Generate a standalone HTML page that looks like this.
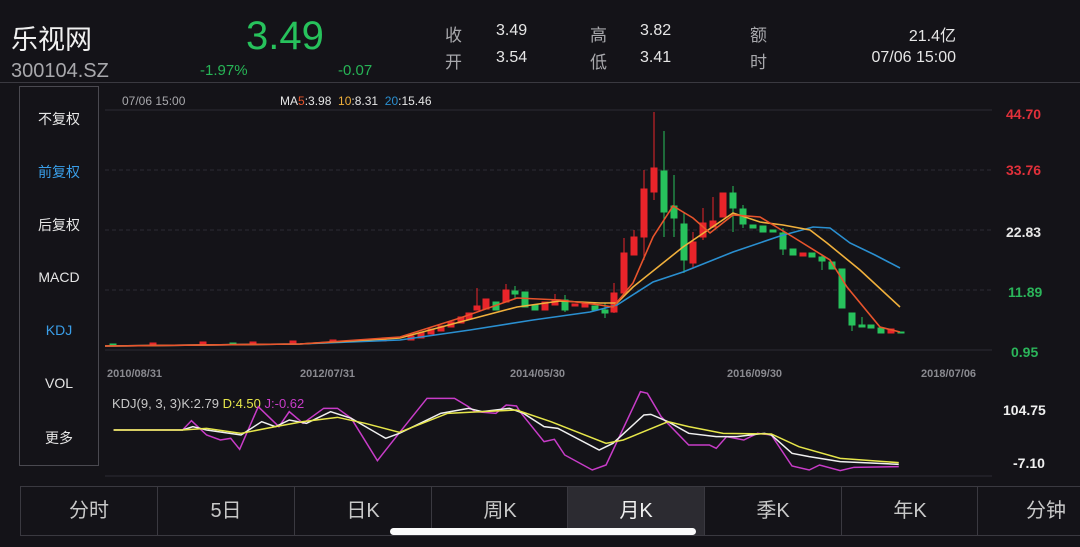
<!DOCTYPE html>
<html><head><meta charset="utf-8"><style>
body{margin:0;width:1080px;height:547px;background:#141318;overflow:hidden;position:relative;font-family:"Liberation Sans","Noto Sans CJK SC",sans-serif;}
.a{position:absolute;white-space:nowrap;}
.side{position:absolute;left:19px;top:86px;width:78px;height:378px;border:1px solid #4a4950;}
.side div{position:absolute;width:78px;text-align:center;font-size:14px;color:#e6e6e6;}
.tabs{position:absolute;left:20px;top:486px;width:1070px;height:48px;border-top:1px solid #3a3940;border-bottom:1px solid #3a3940;}
.tabs div{position:absolute;top:0;height:48px;line-height:48px;text-align:center;font-size:20px;color:#c8c8c8;border-left:1px solid #3a3940;width:136px;}
</style></head><body>
<div class="a" style="left:11px;top:18px;font-size:27px;color:#f0f0f0;">乐视网</div>
<div class="a" style="left:11px;top:60px;font-size:20px;color:#a8a8ac;">300104.SZ</div>
<div class="a" style="left:246px;top:14px;font-size:40px;color:#27c25c;">3.49</div>
<div class="a" style="left:200px;top:62px;font-size:15px;color:#27b456;">-1.97%</div>
<div class="a" style="left:338px;top:62px;font-size:15px;color:#27b456;">-0.07</div>
<div class="a" style="left:445px;top:21px;font-size:17px;color:#a8a8ac;">收</div>
<div class="a" style="left:496px;top:22px;font-size:16px;color:#e6e6e6;">3.49</div>
<div class="a" style="left:445px;top:48px;font-size:17px;color:#a8a8ac;">开</div>
<div class="a" style="left:496px;top:49px;font-size:16px;color:#e6e6e6;">3.54</div>
<div class="a" style="left:590px;top:21px;font-size:17px;color:#a8a8ac;">高</div>
<div class="a" style="left:640px;top:22px;font-size:16px;color:#e6e6e6;">3.82</div>
<div class="a" style="left:590px;top:48px;font-size:17px;color:#a8a8ac;">低</div>
<div class="a" style="left:640px;top:49px;font-size:16px;color:#e6e6e6;">3.41</div>
<div class="a" style="left:750px;top:21px;font-size:17px;color:#a8a8ac;">额</div>
<div class="a" style="left:750px;top:48px;font-size:17px;color:#a8a8ac;">时</div>
<div class="a" style="right:124px;top:22px;font-size:16px;color:#e6e6e6;">21.4亿</div>
<div class="a" style="right:124px;top:49px;font-size:16px;color:#e6e6e6;">07/06 15:00</div>
<div class="a" style="left:0;top:82px;width:1080px;height:1px;background:#3a3940;"></div>

<div class="side">
<div style="top:22px">不复权</div>
<div style="top:75px;color:#3a9ee8">前复权</div>
<div style="top:128px">后复权</div>
<div style="top:182px">MACD</div>
<div style="top:235px;color:#3a9ee8">KDJ</div>
<div style="top:288px">VOL</div>
<div style="top:341px">更多</div>
</div>

<div class="a" style="left:122px;top:94px;font-size:12px;color:#a8a8ac;">07/06 15:00</div>
<div class="a" style="left:280px;top:94px;font-size:12px;color:#e6e6e6;">MA<span style="color:#e8542c">5</span>:3.98 &nbsp;<span style="color:#f0b03c">10</span>:8.31 &nbsp;<span style="color:#2a8fd0">20</span>:15.46</div>
<div class="a" style="left:1006px;top:106px;font-size:14px;font-weight:bold;color:#e0303a;">44.70</div>
<div class="a" style="left:1006px;top:162px;font-size:14px;font-weight:bold;color:#e0303a;">33.76</div>
<div class="a" style="left:1006px;top:224px;font-size:14px;font-weight:bold;color:#e6e6e6;">22.83</div>
<div class="a" style="left:1008px;top:284px;font-size:14px;font-weight:bold;color:#2bb55a;">11.89</div>
<div class="a" style="left:1011px;top:344px;font-size:14px;font-weight:bold;color:#2bb55a;">0.95</div>
<div class="a" style="left:107px;top:368px;font-size:11px;font-weight:bold;color:#8a8a90;">2010/08/31</div>
<div class="a" style="left:300px;top:368px;font-size:11px;font-weight:bold;color:#8a8a90;">2012/07/31</div>
<div class="a" style="left:510px;top:368px;font-size:11px;font-weight:bold;color:#8a8a90;">2014/05/30</div>
<div class="a" style="left:727px;top:368px;font-size:11px;font-weight:bold;color:#8a8a90;">2016/09/30</div>
<div class="a" style="left:921px;top:368px;font-size:11px;font-weight:bold;color:#8a8a90;">2018/07/06</div>
<div class="a" style="left:112px;top:396px;font-size:13px;color:#c8c8c8;">KDJ(9, 3, 3)K:2.79 <span style="color:#e6e64a">D:4.50</span> <span style="color:#c83cc8">J:-0.62</span></div>
<div class="a" style="left:1003px;top:402px;font-size:14px;font-weight:bold;color:#f0f0f0;">104.75</div>
<div class="a" style="left:1013px;top:455px;font-size:14px;font-weight:bold;color:#f0f0f0;">-7.10</div>

<svg class="a" style="left:0;top:0" width="1080" height="547">
<g stroke="#2c2b33" stroke-width="1">
<line x1="105" y1="110" x2="992" y2="110"/>
<line x1="105" y1="170" x2="992" y2="170" stroke-dasharray="4 3"/>
<line x1="105" y1="230" x2="992" y2="230" stroke-dasharray="4 3"/>
<line x1="105" y1="290" x2="992" y2="290" stroke-dasharray="4 3"/>
<line x1="105" y1="350" x2="992" y2="350"/>
<line x1="105" y1="476" x2="992" y2="476"/>
</g>
<g stroke-width="1">
<!-- early flat candles -->
<g fill="#e8242a" stroke="#e8242a">
<rect x="150" y="343" width="6" height="2"/><rect x="200" y="342" width="6" height="2"/><rect x="250" y="342" width="6" height="2"/><rect x="290" y="341" width="6" height="2"/><rect x="330" y="340" width="6" height="2"/><rect x="380" y="339" width="6" height="2"/>
<rect x="408" y="336" width="6" height="4"/><rect x="418" y="333" width="6" height="5"/><rect x="428" y="329" width="6" height="5"/><rect x="438" y="326" width="6" height="5"/><rect x="448" y="322" width="6" height="5"/><rect x="458" y="317" width="6" height="6"/><rect x="466" y="313" width="6" height="6"/>
<line x1="477" y1="288" x2="477" y2="310"/><rect x="474" y="306" width="6" height="4"/>
<rect x="483" y="299" width="6" height="10"/>
<line x1="506" y1="284" x2="506" y2="302"/><rect x="503" y="290" width="6" height="12"/>
<rect x="542" y="302" width="6" height="8"/><line x1="555" y1="294" x2="555" y2="305"/><rect x="552" y="300" width="6" height="5"/>
<rect x="572" y="304" width="6" height="2"/><rect x="582" y="304" width="6" height="3"/>
<line x1="614" y1="283" x2="614" y2="313"/><rect x="611" y="293" width="6" height="19"/>
<line x1="624" y1="238" x2="624" y2="293"/><rect x="621" y="253" width="6" height="40"/>
<line x1="634" y1="230" x2="634" y2="255"/><rect x="631" y="237" width="6" height="18"/>
<line x1="644" y1="170" x2="644" y2="260"/><rect x="641" y="189" width="6" height="48"/>
<line x1="654" y1="112" x2="654" y2="200"/><rect x="651" y="168" width="6" height="24"/>
<line x1="693" y1="232" x2="693" y2="268"/><rect x="690" y="242" width="6" height="21"/>
<line x1="703" y1="208" x2="703" y2="240"/><rect x="700" y="223" width="6" height="14"/>
<line x1="713" y1="197" x2="713" y2="228"/><rect x="710" y="221" width="6" height="6"/>
<rect x="720" y="193" width="6" height="24"/>
<rect x="800" y="253" width="6" height="3"/><rect x="888" y="329" width="6" height="4"/>
</g>
<g fill="#27c25c" stroke="#27c25c">
<rect x="110" y="344" width="6" height="2"/><rect x="230" y="343" width="6" height="1"/>
<rect x="493" y="302" width="6" height="8"/><line x1="515" y1="286" x2="515" y2="298"/><rect x="512" y="291" width="6" height="3"/>
<rect x="522" y="292" width="6" height="15"/><rect x="532" y="305" width="6" height="5"/>
<line x1="565" y1="295" x2="565" y2="312"/><rect x="562" y="300" width="6" height="10"/>
<rect x="592" y="306" width="6" height="4"/><line x1="605" y1="303" x2="605" y2="318"/><rect x="602" y="310" width="6" height="3"/>
<line x1="664" y1="131" x2="664" y2="237"/><rect x="661" y="171" width="6" height="41"/>
<line x1="674" y1="175" x2="674" y2="237"/><rect x="671" y="206" width="6" height="12"/>
<line x1="684" y1="212" x2="684" y2="273"/><rect x="681" y="224" width="6" height="36"/>
<line x1="733" y1="186" x2="733" y2="232"/><rect x="730" y="193" width="6" height="15"/>
<line x1="743" y1="205" x2="743" y2="228"/><rect x="740" y="209" width="6" height="15"/>
<rect x="750" y="225" width="6" height="3"/><rect x="760" y="226" width="6" height="6"/><rect x="770" y="230" width="6" height="2"/>
<line x1="783" y1="228" x2="783" y2="255"/><rect x="780" y="233" width="6" height="16"/>
<rect x="790" y="249" width="6" height="6"/><rect x="809" y="253" width="6" height="4"/>
<line x1="822" y1="255" x2="822" y2="270"/><rect x="819" y="257" width="6" height="4"/>
<rect x="829" y="262" width="6" height="7"/>
<rect x="839" y="269" width="6" height="39"/>
<line x1="852" y1="313" x2="852" y2="331"/><rect x="849" y="313" width="6" height="12"/>
<line x1="862" y1="317" x2="862" y2="326"/><rect x="859" y="325" width="6" height="2"/>
<rect x="868" y="325" width="6" height="3"/>
<rect x="878" y="328" width="6" height="5"/><rect x="898" y="332" width="6" height="1"/>
</g>
</g>
<g fill="none" stroke-width="1.6">
<polyline stroke="#2a8fd0" points="105,346 300,344 400,340 470,330 533,320 590,312 617,305 653,282 683,272 733,252 780,236 813,227 830,228 850,243 875,255 900,268"/>
<polyline stroke="#f0b03c" points="105,346 300,344 400,338 460,322 517,307 560,301 600,303 617,303 633,287 683,247 733,213 760,222 783,225 810,230 827,243 860,270 900,307"/>
<polyline stroke="#e8542c" points="105,346 300,344 400,337 460,318 517,298 560,300 600,305 613,307 633,283 653,237 673,206 693,218 710,233 733,215 760,217 793,237 830,260 847,287 880,327 900,332"/>
</g>
<g fill="none" transform="translate(0,380) scale(0.6887,0.3333)">
<polyline vector-effect="non-scaling-stroke" stroke-width="1.5" stroke="#c83cc8" points="165,150 265,150 278,122 300,165 320,180 335,175 348,208 375,80 405,140 420,95 440,130 470,85 490,85 510,115 548,242 580,158 620,55 660,55 680,80 690,95 720,100 735,75 750,78 755,95 790,185 805,178 820,225 860,270 880,255 930,35 940,40 960,110 1000,195 1030,195 1040,205 1055,170 1080,180 1100,160 1120,165 1150,258 1175,270 1190,255 1220,272 1240,262 1305,260"/>
<polyline vector-effect="non-scaling-stroke" stroke-width="1.5" stroke="#f0f0f0" points="165,150 265,150 280,140 300,150 350,165 380,125 400,140 420,120 445,130 480,95 510,115 560,175 580,160 640,100 680,85 700,95 740,85 760,100 790,140 810,145 870,210 890,190 935,105 945,103 970,125 1000,160 1040,170 1070,170 1110,160 1120,165 1150,220 1175,230 1220,245 1305,253"/>
<polyline vector-effect="non-scaling-stroke" stroke-width="1.5" stroke="#e6e64a" points="165,150 265,150 300,145 350,160 400,140 440,125 490,112 530,130 580,157 650,100 700,95 750,90 800,125 880,190 905,180 970,125 1000,140 1050,160 1120,162 1160,200 1220,235 1305,248"/>
</g>
</svg>

<div class="tabs">
<div style="left:0;border-left:1px solid #3a3940">分时</div>
<div style="left:137px">5日</div>
<div style="left:274px">日K</div>
<div style="left:411px">周K</div>
<div style="left:547px;background:#2c2b31;color:#f0f0f0">月K</div>
<div style="left:684px">季K</div>
<div style="left:821px">年K</div>
<div style="left:957px">分钟</div>
</div>
<div class="a" style="left:390px;top:528px;width:306px;height:7px;border-radius:4px;background:#fafafa;"></div>
</body></html>
